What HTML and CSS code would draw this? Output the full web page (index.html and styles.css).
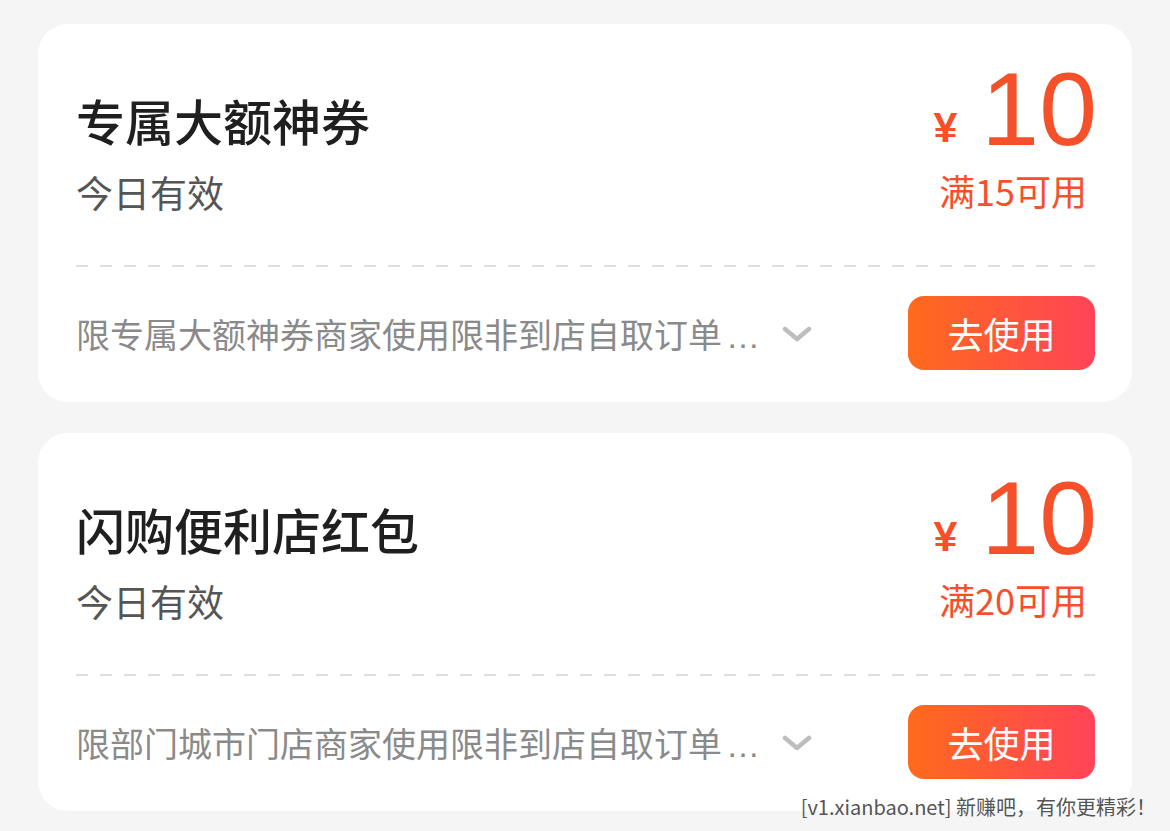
FILE: index.html
```html
<!DOCTYPE html>
<html lang="zh-CN">
  <head>
    <meta charset="UTF-8" />
    <title>红包卡券</title>
    <link rel="stylesheet" href="styles.css">
  </head>
  <body>
    <div class="coupon-list">
      <div class="coupon">
        <div class="coupon-top">
          <div class="coupon-info">
            <div class="coupon-title">专属大额神券</div>
            <div class="coupon-valid">今日有效</div>
          </div>
          <div class="coupon-price">
            <div class="price-row">
              <span class="price-unit">¥</span>
              <span class="price-num">10</span>
            </div>
            <div class="price-cond">满15可用</div>
          </div>
        </div>
        <div class="coupon-divider"></div>
        <div class="coupon-bottom">
          <div class="coupon-rule">
            <span class="rule-text">限专属大额神券商家使用限非到店自取订单<span class="ellipsis">…</span></span>
            <svg class="rule-arrow" width="30" height="18" viewBox="0 0 30 18">
              <path d="M3 4 L15 14 L27 4" fill="none" stroke="#bdbdbd" stroke-width="4.5" stroke-linecap="round" stroke-linejoin="round" />
            </svg>
          </div>
          <button class="use-btn">去使用</button>
        </div>
      </div>

      <div class="coupon">
        <div class="coupon-top">
          <div class="coupon-info">
            <div class="coupon-title">闪购便利店红包</div>
            <div class="coupon-valid">今日有效</div>
          </div>
          <div class="coupon-price">
            <div class="price-row">
              <span class="price-unit">¥</span>
              <span class="price-num">10</span>
            </div>
            <div class="price-cond">满20可用</div>
          </div>
        </div>
        <div class="coupon-divider"></div>
        <div class="coupon-bottom">
          <div class="coupon-rule">
            <span class="rule-text">限部门城市门店商家使用限非到店自取订单<span class="ellipsis">…</span></span>
            <svg class="rule-arrow" width="30" height="18" viewBox="0 0 30 18">
              <path d="M3 4 L15 14 L27 4" fill="none" stroke="#bdbdbd" stroke-width="4.5" stroke-linecap="round" stroke-linejoin="round" />
            </svg>
          </div>
          <button class="use-btn">去使用</button>
        </div>
      </div>
    </div>

    <div class="watermark">[v1.xianbao.net] 新赚吧，有你更精彩！</div>
  </body>
</html>
```

FILE: styles.css
```css
body {
  margin: 0;
  background-color: #f5f5f5;
  font-family: "Noto Sans CJK SC", "Noto Sans", sans-serif;
  overflow: hidden;
}
.coupon-list {
  display: flex;
  flex-direction: column;
  gap: 31px;
  padding: 24px 38px 0 38px;
}
.coupon {
  background-color: #fff;
  border-radius: 30px;
  padding: 33px 37px 32px 38px;
}
.coupon-top {
  display: flex;
  justify-content: space-between;
  align-items: flex-start;
}
.coupon-title {
  margin-top: 33px;
  font-size: 49px;
  line-height: 60px;
  font-weight: 500;
  color: #1f1f1f;
}
.coupon-valid {
  margin-top: 17px;
  font-size: 37px;
  line-height: 50px;
  color: #555;
}
.coupon-price {
  display: flex;
  flex-direction: column;
  align-items: flex-end;
  color: #f6502a;
}
.price-row {
  display: flex;
  align-items: baseline;
  height: 104px;
}
.price-unit {
  position: relative;
  top: -3px;
  font-family: "Liberation Sans", Arial, sans-serif;
  font-size: 43px;
  font-weight: bold;
  line-height: 104px;
  margin-right: 24px;
}
.price-num {
  font-family: "Liberation Sans", Arial, sans-serif;
  font-size: 104px;
  line-height: 104px;
  margin-right: -2px;
}
.price-cond {
  margin-top: 9px;
  font-size: 36px;
  line-height: 40px;
  margin-right: 8px;
}
.coupon-divider {
  margin-top: 48px;
  height: 2px;
  background-image: linear-gradient(to right, #dedede 50%, transparent 50%);
  background-size: 24px 2px;
  background-repeat: repeat-x;
}
.coupon-bottom {
  display: flex;
  justify-content: space-between;
  align-items: center;
  margin-top: 29px;
}
.coupon-rule {
  display: flex;
  align-items: center;
  gap: 20px;
}
.rule-text {
  font-size: 34px;
  color: #8a8a8a;
}
.ellipsis {
  font-family: "Liberation Sans", Arial, sans-serif;
  letter-spacing: 2px;
  margin-left: 4px;
}
.rule-arrow {
  margin-top: 2px;
}
.use-btn {
  width: 187px;
  height: 74px;
  border: none;
  border-radius: 16px;
  background: linear-gradient(to right, #ff6a1c, #ff4458);
  color: #fff;
  font-family: "Noto Sans CJK SC", sans-serif;
  font-size: 36px;
  padding: 0;
}
.watermark {
  position: absolute;
  right: 14px;
  bottom: 10px;
  font-size: 20px;
  color: #555;
  font-family: "Noto Sans CJK SC", "Liberation Sans", sans-serif;
}
```
